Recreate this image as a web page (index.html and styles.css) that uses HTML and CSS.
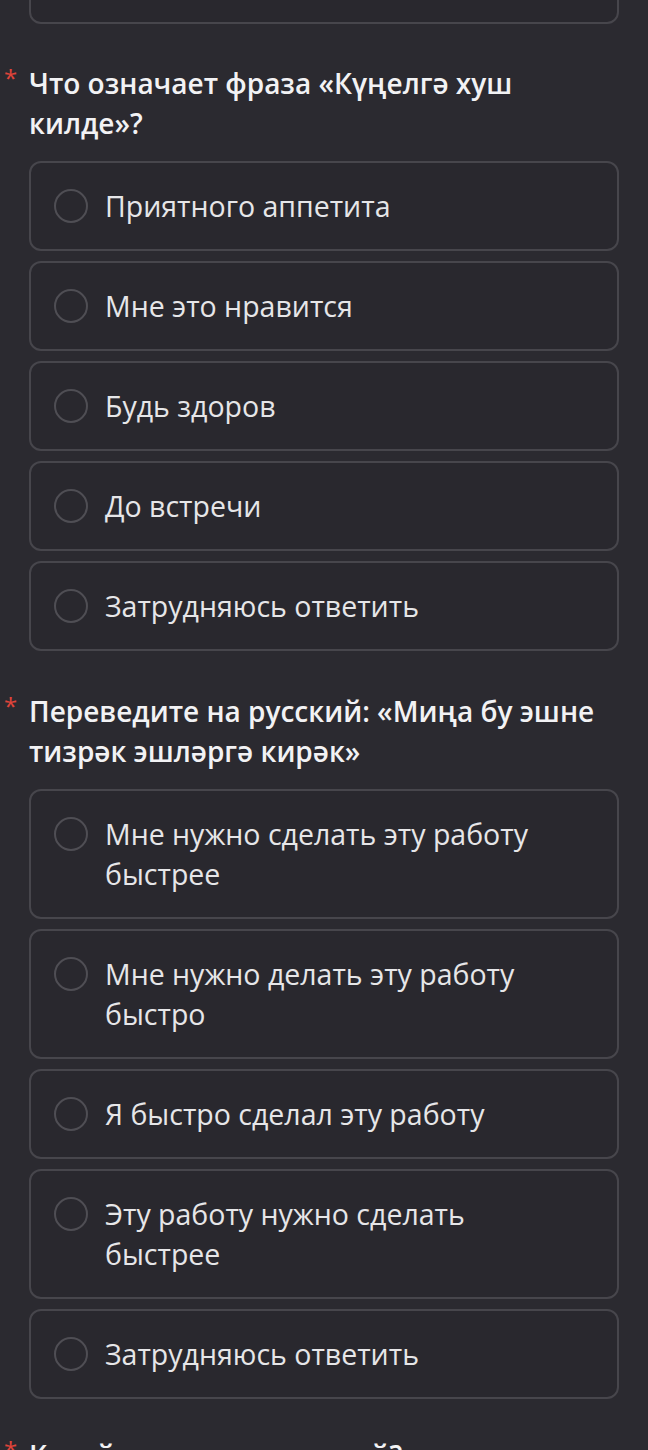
FILE: index.html
```html
<!DOCTYPE html>
<html lang="ru">
<head>
<meta charset="utf-8">
<link rel="stylesheet" href="styles.css">
</head>
<body>
<div class="page">
  <div class="option option-cut"></div>

  <section class="question">
    <h2 class="title"><span class="req">*</span>Что означает фраза «Күңелгә хуш килде»?</h2>
    <div class="options">
      <div class="option"><span class="radio"></span><span class="label">Приятного аппетита</span></div>
      <div class="option"><span class="radio"></span><span class="label">Мне это нравится</span></div>
      <div class="option"><span class="radio"></span><span class="label">Будь здоров</span></div>
      <div class="option"><span class="radio"></span><span class="label">До встречи</span></div>
      <div class="option"><span class="radio"></span><span class="label">Затрудняюсь ответить</span></div>
    </div>
  </section>

  <section class="question question-second">
    <h2 class="title"><span class="req">*</span>Переведите на русский: «Миңа бу эшне тизрәк эшләргә кирәк»</h2>
    <div class="options">
      <div class="option"><span class="radio"></span><span class="label">Мне нужно сделать эту работу быстрее</span></div>
      <div class="option"><span class="radio"></span><span class="label">Мне нужно делать эту работу быстро</span></div>
      <div class="option"><span class="radio"></span><span class="label">Я быстро сделал эту работу</span></div>
      <div class="option"><span class="radio"></span><span class="label">Эту работу нужно сделать быстрее</span></div>
      <div class="option"><span class="radio"></span><span class="label">Затрудняюсь ответить</span></div>
    </div>
  </section>

  <section class="question question-next">
    <h2 class="title"><span class="req">*</span>Какой ответ правильный?</h2>
  </section>
</div>
</body>
</html>
```

FILE: styles.css
```css
html, body {
  margin: 0;
  padding: 0;
  background: #2b2a30;
}
body {
  font-family: "Open Sans", "Noto Sans", sans-serif;
  color: #ebebed;
  overflow: hidden;
  height: 1450px;
}
.page {
  padding: 0 29px;
}
.option-cut {
  height: 90px;
  margin-top: -66px;
  box-sizing: border-box;
}
.question {
  margin-top: 39px;
}
.question-second {
  margin-top: 40px;
}
.question-next {
  margin-top: 36px;
}
.title {
  position: relative;
  margin: 0 0 18px 0;
  font-size: 28px;
  line-height: 40px;
  font-weight: 600;
  color: #f2f2f4;
}
.req {
  position: absolute;
  left: -25px;
  top: 0;
  font-size: 24px;
  line-height: 30px;
  color: #e0443a;
  font-weight: 400;
}
.options {
  display: flex;
  flex-direction: column;
  gap: 10px;
}
.option {
  display: flex;
  align-items: flex-start;
  gap: 17px;
  border: 2px solid #47464c;
  border-radius: 12px;
  padding: 23px 40px 23px 23px;
  background: #29282e;
}
.radio {
  flex: none;
  width: 30px;
  height: 30px;
  margin-top: 3px;
  border: 2px solid #4f4e54;
  border-radius: 50%;
}
.label {
  font-size: 28.5px;
  line-height: 40px;
  color: #e6e6e8;
}
```
